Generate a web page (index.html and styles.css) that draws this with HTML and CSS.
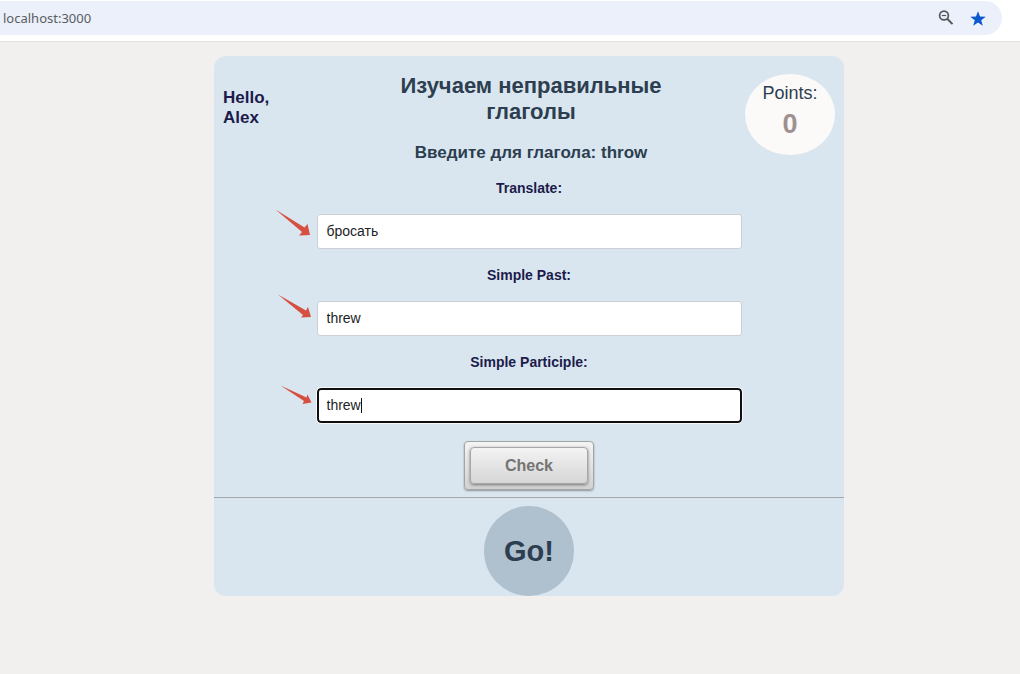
FILE: index.html
```html
<!DOCTYPE html>
<html lang="ru">
<head>
<meta charset="utf-8">
<meta name="viewport" content="width=device-width, initial-scale=1">
<title>Irregular verbs</title>
<link rel="stylesheet" href="styles.css">
</head>
<body>
<div class="toolbar">
  <div class="address">
    <span class="url">localhost:3000</span>
    <button class="tool" type="button" aria-label="Zoom">
      <svg width="20" height="20" viewBox="0 0 20 20" fill="none" stroke="#55585b"><circle cx="8" cy="7.5" r="4.4" stroke-width="1.7"/><path d="M5.8 7.5h4.4" stroke-width="1.2"/><path d="M11.2 10.8l5.3 5.3" stroke-width="2"/></svg>
    </button>
    <button class="tool" type="button" aria-label="Bookmark">
      <svg width="20" height="20" viewBox="0 0 20 20" fill="#0b57d0"><path d="M10 3.200l2 5.300 5.700.2-4.500 3.500 1.600 5.500L10 14.500l-4.800 3.200 1.600-5.500-4.500-3.500 5.700-.2z"/></svg>
    </button>
  </div>
</div>
<main class="page">
  <section class="card">
    <header class="head">
      <p class="hello">Hello,<br>Alex</p>
      <div class="titles">
        <h1 class="title">Изучаем неправильные глаголы</h1>
        <h2 class="task">Введите для глагола: throw</h2>
      </div>
      <div class="points">
        <span class="points-label">Points:</span>
        <strong class="points-value">0</strong>
      </div>
    </header>
    <form class="form">
      <label class="label" for="translate">Translate:</label>
      <div class="field">
        <input class="input" id="translate" type="text" value="бросать">
        <svg class="arrow" width="40" height="36" viewBox="0 0 40 36"><path d="M2.500 3.500L31.500 21.500 34.500 18 37 29 26 29.500 29 26z"/></svg>
      </div>
      <label class="label" for="past">Simple Past:</label>
      <div class="field">
        <input class="input" id="past" type="text" value="threw">
        <svg class="arrow" width="40" height="36" viewBox="0 0 40 36"><path d="M5 1.500L33 17.500 35 14 38 24 28 24.500 30 22z"/></svg>
      </div>
      <label class="label" for="participle">Simple Participle:</label>
      <div class="field">
        <input class="input" id="participle" type="text" value="threw" autocomplete="off" autofocus>
        <span class="caret"></span>
        <svg class="arrow" width="40" height="36" viewBox="0 0 40 36"><path d="M7.500 5.500L33.500 17.500 34.500 14.500 38.500 22.500 29.500 24 31 21z"/></svg>
      </div>
      <button class="check" type="button"><span class="check-face">Check</span></button>
    </form>
    <footer class="foot">
      <button class="go" type="button">Go!</button>
    </footer>
  </section>
</main>
</body>
</html>
```
FILE: styles.css
```css
* {
  box-sizing: border-box;
}

body {
  margin: 0;
  min-height: 100vh;
  background: #f1f0ee;
  color: #2c3e50;
  font-family: "Liberation Sans", Arial, sans-serif;
}

button {
  font-family: inherit;
  border: 0;
  padding: 0;
  cursor: pointer;
}

.toolbar {
  padding: 1px 18px 6px 0;
  background: #fff;
  border-bottom: 1px solid #e3e3e3;
}

.address {
  display: flex;
  align-items: center;
  gap: 12px;
  height: 34px;
  padding: 0 14px 0 3px;
  border-radius: 0 17px 17px 0;
  background: #ebf0fa;
}

.url {
  flex: 1;
  color: #5a5d61;
  font-family: "Noto Sans", sans-serif;
  font-size: 13px;
}

.tool {
  display: flex;
  background: none;
}

.page {
  padding: 14px 0 16px 38px;
}

.card {
  max-width: 630px;
  margin: 0 auto;
  border-radius: 12px;
  background: #dae6ef;
}

.head {
  display: grid;
  grid-template-columns: 90px 1fr 90px;
  padding: 17px 9px 0;
}

.hello {
  margin: 15px 0 0;
  color: #1c1b4b;
  font-size: 17px;
  font-weight: bold;
  line-height: 20px;
}

.titles {
  padding: 0 60px 0 64px;
  text-align: center;
}

.title {
  margin: 0;
  font-size: 22px;
  line-height: 26px;
}

.task {
  margin: 18px 0 0;
  font-size: 17px;
  line-height: 20px;
}

.points {
  display: flex;
  flex-direction: column;
  align-items: center;
  align-self: start;
  gap: 6px;
  height: 81px;
  margin-top: 1px;
  padding-top: 8px;
  border-radius: 50%;
  background: #fbfaf9;
}

.points-label {
  font-size: 18px;
  line-height: 22px;
}

.points-value {
  color: #a09090;
  font-size: 27px;
  line-height: 28px;
}

.form {
  display: flex;
  flex-direction: column;
  align-items: center;
  padding: 0 20px 7px;
}

.label {
  padding: 16px 0;
  color: #1c1b4b;
  font-size: 14px;
  font-weight: bold;
  line-height: 20px;
}

.label:first-child {
  padding-top: 15px;
}

.field {
  position: relative;
  width: 100%;
  max-width: 425px;
}

.input {
  display: block;
  width: 100%;
  height: 35px;
  padding: 0 9px 1px;
  border: 1px solid #ccd0d4;
  border-radius: 3px;
  background: #fff;
  color: #222;
  font-family: inherit;
  font-size: 14px;
}

.input:focus {
  border: 2px solid #101010;
  border-radius: 4px;
  outline: 1px solid #f4f8fb;
  padding: 0 8px 1px;
  caret-color: transparent;
}

.caret {
  display: none;
  position: absolute;
  left: 44px;
  top: 10px;
  width: 1px;
  height: 15px;
  background: #111;
}

.input:focus + .caret {
  display: block;
}

.arrow {
  position: absolute;
  right: 100%;
  top: -8px;
  margin-right: 4px;
  fill: #d64f40;
}

.check {
  margin-top: 18px;
  padding: 5px;
  border: 1px solid #a2a5a8;
  border-radius: 4px;
  background: linear-gradient(#f4f4f4, #d2d2d2);
  box-shadow: 0 1px 2px #8c959c;
}

.check-face {
  display: block;
  padding: 0 34px;
  border: 1px solid #a6a6a6;
  border-radius: 4px;
  background: linear-gradient(#f3f3f3, #d6d6d6);
  box-shadow: 0 1px 3px #777;
  color: #747474;
  font-size: 16px;
  font-weight: bold;
  line-height: 35px;
}

.foot {
  display: flex;
  justify-content: center;
  padding-top: 8px;
  border-top: 1px solid #a5a8aa;
}

.go {
  width: 90px;
  height: 90px;
  border-radius: 50%;
  background: #afc0cf;
  color: #2c3e50;
  font-size: 29px;
  font-weight: bold;
}
```
